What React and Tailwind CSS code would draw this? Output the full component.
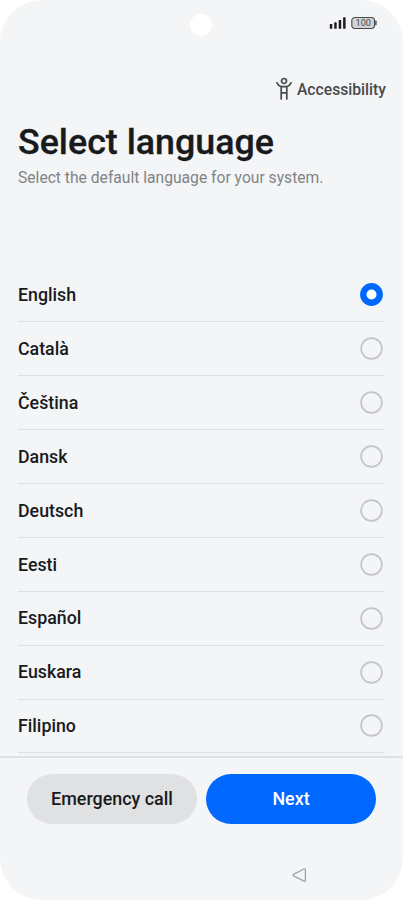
const langs = ['English', 'Català', 'Čeština', 'Dansk', 'Deutsch', 'Eesti', 'Español', 'Euskara', 'Filipino'];

function Radio({ on }) {
  return (
    <svg width="23" height="23" viewBox="0 0 23 23" fill="none">
      {on ? (
        <>
          <circle cx="11.5" cy="11.5" r="11.4" fill="#0068ff" />
          <circle cx="11.5" cy="11.5" r="5" fill="#fff" />
        </>
      ) : (
        <circle cx="11.5" cy="11.5" r="10.4" stroke="#c4c5c7" strokeWidth="1.7" />
      )}
    </svg>
  );
}

function StatusIcons() {
  return (
    <svg className="mt-[2px] mr-[25px] justify-self-end" width="49" height="14" viewBox="0 0 49 14">
      <g fill="#1d1d1f">
        <rect x="0.8" y="8" width="2.5" height="4.8" rx="0.6" />
        <rect x="5.2" y="6.3" width="2.5" height="6.5" rx="0.6" />
        <rect x="9.7" y="4" width="2.5" height="8.8" rx="0.6" />
        <rect x="14.1" y="1.2" width="2.5" height="11.6" rx="0.6" />
      </g>
      <rect x="22.8" y="1.5" width="22.7" height="11" rx="3.2" fill="#d3d4d6" stroke="#48494b" strokeWidth="1.1" />
      <path d="M46.9 5.3V8.7" stroke="#48494b" strokeWidth="1.4" strokeLinecap="round" />
      <text x="34.3" y="10.4" fontSize="9.2" textAnchor="middle" fill="#48494b">100</text>
    </svg>
  );
}

export default function App() {
  return (
    <div className="h-[900px] w-[403px] bg-white font-['Roboto',sans-serif]">
      <div className="flex h-full flex-col overflow-hidden rounded-[42px] bg-[#f3f5f7] text-[#191a1c]">
        <header className="grid h-[64px] shrink-0 grid-cols-3 pt-[14px]">
          <span />
          <span className="size-[22px] justify-self-center rounded-full bg-white" />
          <StatusIcons />
        </header>
        <div className="flex h-[50px] shrink-0 items-center justify-end pr-[17px] text-[15.7px] font-medium text-[#48494b]">
          <svg className="mr-[5px] mb-px" width="16" height="24" viewBox="0 0 16 24" fill="none" stroke="#48494b" strokeWidth="1.7" strokeLinecap="round" strokeLinejoin="round">
            <circle cx="8" cy="4" r="2.5" />
            <path d="M1 5.8Q2.2 8.6 5.2 9.7V22M15 5.8Q13.8 8.6 10.8 9.7V22M5.2 9.7H10.8M5.2 15.8H10.8" />
          </svg>
          <span className="pt-[2px]">Accessibility</span>
        </div>
        <h1 className="h-[52px] shrink-0 pl-[18px] text-[35.8px] leading-[56px] font-medium [-webkit-text-stroke:0.3px_#191a1c]">Select language</h1>
        <p className="h-[102px] shrink-0 pt-px pl-[18px] text-[15.65px] leading-[22px] text-[#828386]">Select the default language for your system.</p>
        <ul className="h-[488px] shrink-0 overflow-hidden px-[18px]">
          {langs.map((name, i) => (
            <li key={name} className="flex h-[53.95px] items-center justify-between border-b border-[#dfe0e2] pr-[2px] text-[17.8px] font-medium">
              <span className="pt-[1.4px]">{name}</span>
              <Radio on={i === 0} />
            </li>
          ))}
        </ul>
        <footer className="flex h-[144px] shrink-0 flex-col border-t-2 border-[#dfe0e2] pt-[16px]">
          <div className="flex gap-[9px] px-[27px] text-[17.9px] font-medium">
            <button className="h-[50px] flex-1 rounded-full bg-[#e0e1e2] pt-px">Emergency call</button>
            <button className="h-[50px] flex-1 rounded-full bg-[#0068ff] pt-px text-white">Next</button>
          </div>
          <svg className="mt-[43px] ml-[291px]" width="16" height="16" viewBox="0 0 16 16" fill="none" stroke="#a3a4a6" strokeWidth="1.3" strokeLinejoin="round">
            <path d="M2.5 7.3L13 2Q14.4 1.5 14.4 3V13.4Q14.4 14.8 13 14.2L2.5 8.9Q1.3 8.1 2.5 7.3Z" />
          </svg>
        </footer>
      </div>
    </div>
  );
}
